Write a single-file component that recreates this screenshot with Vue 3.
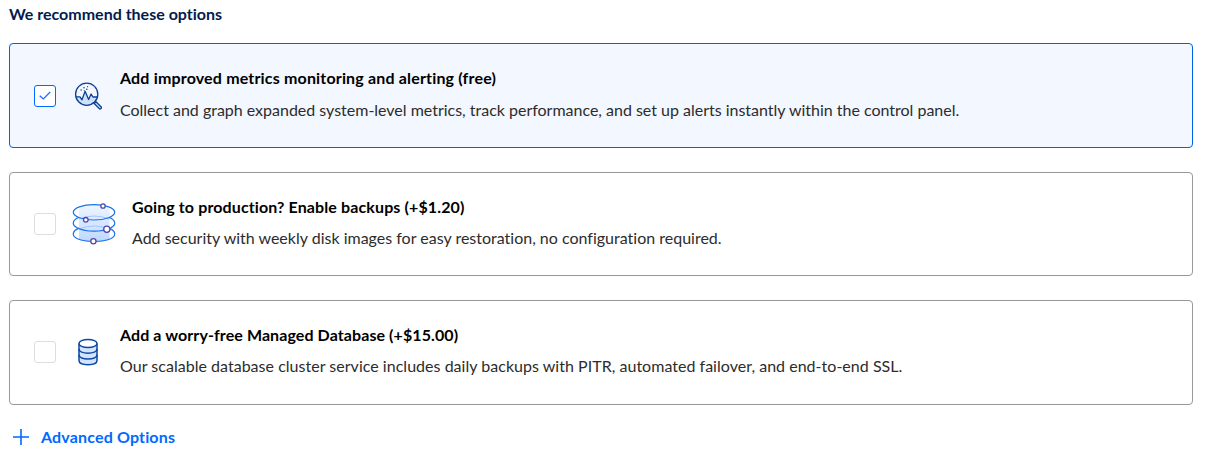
<script setup>
const options = [
  {
    id: 'metrics',
    title: 'Add improved metrics monitoring and alerting (free)',
    text: 'Collect and graph expanded system-level metrics, track performance, and set up alerts instantly within the control panel.',
    checked: true,
  },
  {
    id: 'backups',
    title: 'Going to production? Enable backups (+$1.20)',
    text: 'Add security with weekly disk images for easy restoration, no configuration required.',
    checked: false,
  },
  {
    id: 'database',
    title: 'Add a worry-free Managed Database (+$15.00)',
    text: 'Our scalable database cluster service includes daily backups with PITR, automated failover, and end-to-end SSL.',
    checked: false,
  },
]
</script>

<template>
  <main class="page">
    <h2 class="heading"><span>We recommend these options</span></h2>
    <div class="list">
      <section v-for="o in options" :key="o.id" class="card" :class="[o.id, { selected: o.checked }]">
        <span class="box">
          <svg v-if="o.checked" width="20" height="20" viewBox="0 0 20 20" fill="none">
            <path d="M4.7 9.7 8.3 13 15.2 6" stroke="#1f69ff" stroke-width="1.2" />
          </svg>
        </span>

        <svg v-if="o.id === 'metrics'" class="icon" width="28" height="28" viewBox="0 0 28 28" fill="none" stroke="#0c3f96" stroke-width="1.3" stroke-linejoin="round">
          <path d="M1.9 14.8H6l2 3 3.1-8.5 3.5 8.2 2.5-5.5 1.8 3h4.6A11.1 11.1 0 0 1 1.9 14.8Z" fill="#cfe0fb" stroke="none" />
          <circle cx="12.7" cy="12.2" r="11.1" />
          <path d="M1.9 14.8H6l2 3 3.1-8.5 3.5 8.2 2.5-5.5 1.8 3h4.5" />
          <path d="m20.2 21.5 1.8-1.8 5 5a1.25 1.25 0 0 1-1.8 1.8Z" fill="#cfe0fb" />
          <g fill="#0c3f96" stroke="none">
            <circle cx="7.1" cy="8" r=".75" /><circle cx="10" cy="5.7" r=".75" />
            <circle cx="12.8" cy="7.2" r=".75" /><circle cx="10.2" cy="8.4" r=".5" /><circle cx="13.6" cy="4.7" r=".6" />
          </g>
        </svg>

        <svg v-else-if="o.id === 'backups'" class="icon" width="44" height="42" viewBox="0 0 44 42" fill="none">
          <defs>
            <linearGradient id="diskShade" x1="0" y1="0" x2="0" y2="1">
              <stop offset="0" stop-color="#eef5ff" />
              <stop offset="1" stop-color="#bed7ff" />
            </linearGradient>
          </defs>
          <path d="M7 5.3C14 1.2 30 1.2 37.5 5.3V36c-8 4.3-23 4.3-30.5 0Z" fill="url(#diskShade)" />
          <path d="M7 16q15-6 30.5 0M7 26q15-6 30.5 0" stroke="#a4c6ff" />
          <g stroke="#1b72ed" stroke-width="1.2">
            <ellipse cx="22" cy="9.3" rx="20.7" ry="7.7" />
            <path d="M7 14.3C-.5 17.5-.3 22.2 5.5 25c8.5 4.2 24.5 4.2 33 0 5.8-2.8 6-7.5-1.5-10.7" />
            <path d="M7 25.1c-7.5 3.2-7.3 7.9-1.5 10.7 8.5 3.5 24.5 3.5 33 0 5.8-2.8 6-7.5-1.5-10.7" />
          </g>
          <g fill="#fff" stroke="#51479f" stroke-width="1.3">
            <circle cx="31" cy="3" r="2.2" /><circle cx="13.8" cy="16.8" r="2.3" />
            <circle cx="34.8" cy="26.2" r="3.1" /><circle cx="21.4" cy="38.3" r="2.6" />
          </g>
        </svg>

        <svg v-else class="icon" width="20" height="28" viewBox="0 0 20 28" fill="none" stroke="#0c47a1" stroke-width="1.5">
          <path d="M1 5.5v17C1 28 19 28 19 22.5v-17" fill="#d3e4ff" />
          <ellipse cx="10" cy="5.5" rx="9" ry="4.1" fill="#fff" />
          <path d="M1 11c0 5.6 18 5.6 18 0M1 16.8c0 5.6 18 5.6 18 0" />
        </svg>

        <div class="copy">
          <h3><span>{{ o.title }}</span></h3>
          <p><span>{{ o.text }}</span></p>
        </div>
      </section>
    </div>
    <a class="advanced">
      <svg width="16" height="16" viewBox="0 0 16 16" stroke="#0069ff" stroke-width="1.6"><path d="M0 8h16M8 0v16" /></svg>
      <span>Advanced Options</span>
    </a>
  </main>
</template>

<style>
body { background: #fff; }
</style>

<style scoped>
.page { box-sizing: border-box; height: 458px; padding: 4px 13px 0 9px; font-family: Lato, "Liberation Sans", sans-serif; font-size: 16px; font-variant-ligatures: none; }
h2, h3, p { margin: 0; }
.heading { height: 39px; font-size: 16px; line-height: 20px; font-weight: 700; color: #031b4e; }
.list { display: flex; flex-direction: column; gap: 24px; }
.card { box-sizing: border-box; height: 105px; display: flex; align-items: center; padding-left: 24px; border: 1px solid #999; border-radius: 4px; }
.card.backups { height: 104px; }
.card.database { padding-bottom: 1px; }
.card.selected { border-color: #0061eb; background: #f3f7ff; }
.box { box-sizing: border-box; width: 22px; height: 22px; border: 1px solid #ddd; border-radius: 3px; background: #fff; flex: none; }
.selected .box { border-color: #0069ff; }
.box svg { display: block; }
.icon { flex: none; display: block; }
.metrics .icon { margin: 0 18px; }
.backups .icon { margin: 0 16px; }
.database .icon { margin: 0 22px; }
.copy { white-space: nowrap; margin-bottom: 3px; }
h3 { font-size: 16px; line-height: 20px; font-weight: 700; letter-spacing: .12px; color: #000; }
p { margin-top: 11px; line-height: 20px; color: #2c2c2c; }
.metrics h3 { letter-spacing: .17px; }
.metrics p { margin-top: 12px; letter-spacing: -.01px; }
.database h3 { letter-spacing: .09px; }
.database p { letter-spacing: .025px; }
.advanced { display: flex; align-items: center; gap: 12px; margin-top: 21px; padding-left: 4px; line-height: 22px; color: #0069ff; font-weight: 700; letter-spacing: .16px; }
</style>
